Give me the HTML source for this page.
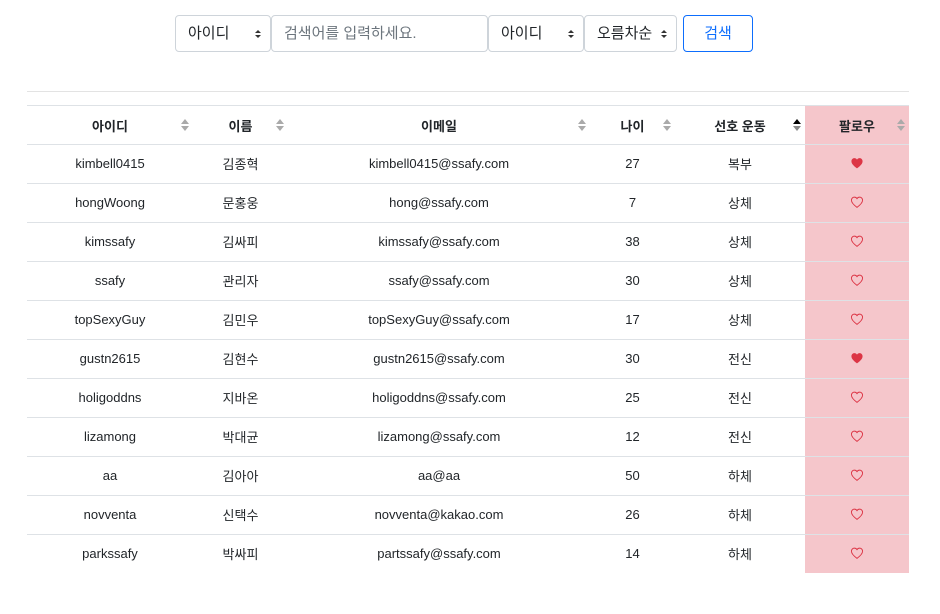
<!DOCTYPE html>
<html><head><meta charset="utf-8"><style>
body{margin:0;background:#fff;font-family:"Liberation Sans","Noto Sans CJK KR",sans-serif;color:#212529;}
.ctl{position:absolute;top:15px;height:37px;border:1px solid #ced4da;border-radius:4px;box-sizing:border-box;font-size:15px;line-height:36px;padding-left:12px;background:#fff}
.sel::before{content:"";position:absolute;right:9px;top:19px;border-left:3px solid transparent;border-right:3px solid transparent;border-top:3px solid #333}
.sel::after{content:"";position:absolute;right:9px;top:14px;border-left:3px solid transparent;border-right:3px solid transparent;border-bottom:3px solid #333}
.btn{position:absolute;top:15px;left:683px;width:70px;height:37px;border:1px solid #0d6efd;border-radius:4px;box-sizing:border-box;color:#0d6efd;font-size:15px;text-align:center;line-height:36px}
.hr{position:absolute;left:27px;width:882px;top:91px;height:1px;background:#e3e3e3}
table{position:absolute;left:27px;top:105px;width:882px;border-collapse:collapse;font-size:13px;table-layout:fixed}
td,th{height:38px;border-top:1px solid #dee2e6;text-align:center;padding:0;position:relative}
td{padding-bottom:2px;height:36px}
th{font-weight:bold;height:38px}
td:last-child,th:last-child{background:#f5c6cb}
.s{position:absolute;right:4px;top:12px;width:8px;height:14px}
.hv{width:14px;height:13px;display:block;margin:0 auto}
</style></head><body>
<div class="ctl sel" style="left:175px;width:96px">아이디</div>
<div class="ctl" style="left:271px;width:217px;color:#6c757d">검색어를 입력하세요.</div>
<div class="ctl sel" style="left:488px;width:96px">아이디</div>
<div class="ctl sel" style="left:584px;width:93px">오름차순</div>
<div class="btn">검색</div>
<div class="hr"></div>
<svg width="0" height="0" style="position:absolute"><defs><path id="hp" d="M7 12.3C3 9.3 1 7.2 1 4.6 1 2.6 2.5 1.2 4.2 1.2 5.4 1.2 6.4 1.8 7 2.8 7.6 1.8 8.6 1.2 9.8 1.2 11.5 1.2 13 2.6 13 4.6 13 7.2 11 9.3 7 12.3Z"/></defs></svg>
<table>
<colgroup><col style="width:166px"><col style="width:95px"><col style="width:302px"><col style="width:85px"><col style="width:130px"><col style="width:104px"></colgroup>
<tr><th>아이디<svg class="s" viewBox="0 0 8 14"><path d="M4 1L8 6H0Z M4 13L8 8H0Z" fill="#aaa"/></svg></th>
<th>이름<svg class="s" viewBox="0 0 8 14"><path d="M4 1L8 6H0Z M4 13L8 8H0Z" fill="#aaa"/></svg></th>
<th>이메일<svg class="s" viewBox="0 0 8 14"><path d="M4 1L8 6H0Z M4 13L8 8H0Z" fill="#aaa"/></svg></th>
<th>나이<svg class="s" viewBox="0 0 8 14"><path d="M4 1L8 6H0Z M4 13L8 8H0Z" fill="#aaa"/></svg></th>
<th>선호 운동<svg class="s" viewBox="0 0 8 14"><path d="M4 1L8 6H0Z" fill="#000"/><path d="M4 13L8 8H0Z" fill="#888"/></svg></th>
<th>팔로우<svg class="s" viewBox="0 0 8 14"><path d="M4 1L8 6H0Z M4 13L8 8H0Z" fill="#aaa"/></svg></th></tr>
<tr><td>kimbell0415</td><td>김종혁</td><td>kimbell0415@ssafy.com</td><td>27</td><td>복부</td><td><svg class="hv" viewBox="0 0 14 14"><use href="#hp" fill="#dc3545"/></svg></td></tr>
<tr><td>hongWoong</td><td>문홍웅</td><td>hong@ssafy.com</td><td>7</td><td>상체</td><td><svg class="hv" viewBox="0 0 14 14"><use href="#hp" fill="none" stroke="#dc3545"/></svg></td></tr>
<tr><td>kimssafy</td><td>김싸피</td><td>kimssafy@ssafy.com</td><td>38</td><td>상체</td><td><svg class="hv" viewBox="0 0 14 14"><use href="#hp" fill="none" stroke="#dc3545"/></svg></td></tr>
<tr><td>ssafy</td><td>관리자</td><td>ssafy@ssafy.com</td><td>30</td><td>상체</td><td><svg class="hv" viewBox="0 0 14 14"><use href="#hp" fill="none" stroke="#dc3545"/></svg></td></tr>
<tr><td>topSexyGuy</td><td>김민우</td><td>topSexyGuy@ssafy.com</td><td>17</td><td>상체</td><td><svg class="hv" viewBox="0 0 14 14"><use href="#hp" fill="none" stroke="#dc3545"/></svg></td></tr>
<tr><td>gustn2615</td><td>김현수</td><td>gustn2615@ssafy.com</td><td>30</td><td>전신</td><td><svg class="hv" viewBox="0 0 14 14"><use href="#hp" fill="#dc3545"/></svg></td></tr>
<tr><td>holigoddns</td><td>지바온</td><td>holigoddns@ssafy.com</td><td>25</td><td>전신</td><td><svg class="hv" viewBox="0 0 14 14"><use href="#hp" fill="none" stroke="#dc3545"/></svg></td></tr>
<tr><td>lizamong</td><td>박대균</td><td>lizamong@ssafy.com</td><td>12</td><td>전신</td><td><svg class="hv" viewBox="0 0 14 14"><use href="#hp" fill="none" stroke="#dc3545"/></svg></td></tr>
<tr><td>aa</td><td>김아아</td><td>aa@aa</td><td>50</td><td>하체</td><td><svg class="hv" viewBox="0 0 14 14"><use href="#hp" fill="none" stroke="#dc3545"/></svg></td></tr>
<tr><td>novventa</td><td>신택수</td><td>novventa@kakao.com</td><td>26</td><td>하체</td><td><svg class="hv" viewBox="0 0 14 14"><use href="#hp" fill="none" stroke="#dc3545"/></svg></td></tr>
<tr><td>parkssafy</td><td>박싸피</td><td>partssafy@ssafy.com</td><td>14</td><td>하체</td><td><svg class="hv" viewBox="0 0 14 14"><use href="#hp" fill="none" stroke="#dc3545"/></svg></td></tr>
</table>
</body></html>
